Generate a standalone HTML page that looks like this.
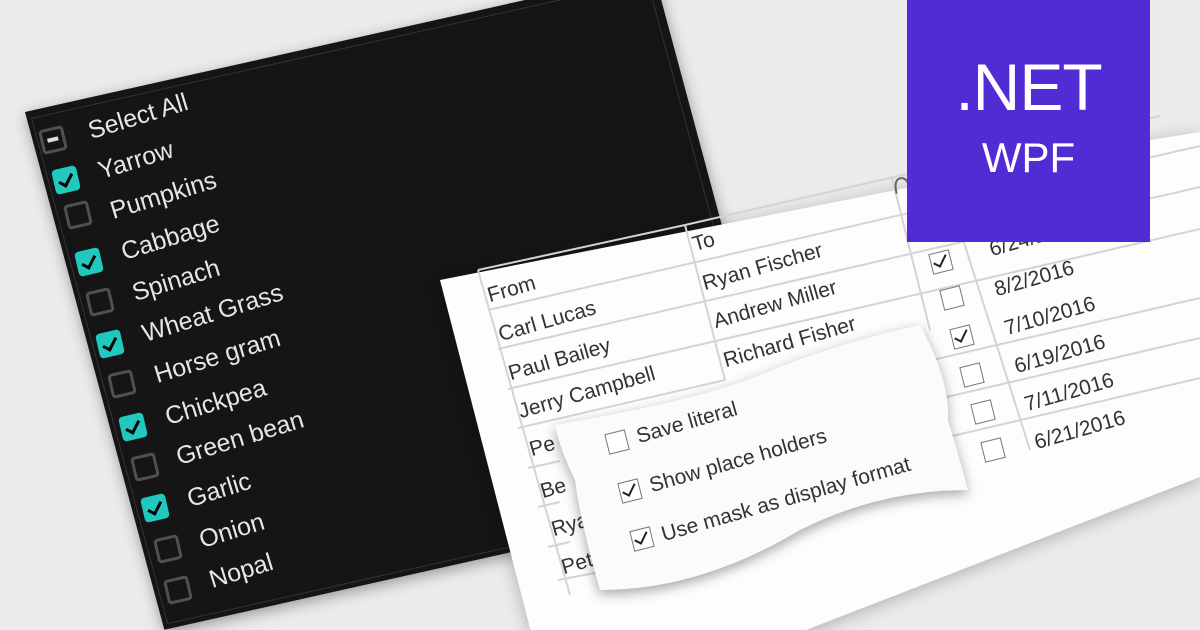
<!DOCTYPE html>
<html><head><meta charset="utf-8"><style>
html,body{margin:0;padding:0;width:1200px;height:630px;overflow:hidden}
body{background:#ebebeb;position:relative;font-family:"Segoe UI","Liberation Sans",sans-serif}
.abs{position:absolute}
.t{position:absolute;white-space:nowrap;transform-origin:0 50%;line-height:1}
.dk{color:#e6e6e6;font-size:25px;transform:translateY(-50%) rotate(-17deg)}
.wt{color:#333;font-size:21px;transform:translateY(-50%) rotate(-16deg)}
.cb{position:absolute;width:19px;height:19px;border:3px solid #505050;border-radius:4px;transform:translate(-50%,-50%) rotate(-13deg);box-sizing:content-box}
.cb.on{background:#20c8be;border-color:#20c8be}
.cb.on::after{content:"";position:absolute;left:5px;top:1px;width:6px;height:12px;border:solid #000;border-width:0 3px 3px 0;transform:rotate(40deg)}
.wc{position:absolute;width:19px;height:19px;border:1.5px solid #777;background:#fff;transform:translate(-50%,-50%) rotate(-14deg)}
.wc.on::after{content:"";position:absolute;left:5px;top:0px;width:6px;height:12px;border:solid #222;border-width:0 2.5px 2.5px 0;transform:rotate(40deg)}
</style></head><body>

<!-- dark panel -->
<div class="abs" style="left:25px;top:112px;width:640px;height:536px;background:#151515;transform-origin:0 0;transform:matrix(0.982,-0.22,0.26,0.966,0,0);box-shadow:0 4px 14px rgba(0,0,0,.35)"></div>
<div class="abs" style="left:31px;top:118px;width:626px;height:522px;border:1.5px solid #333;transform-origin:0 0;transform:matrix(0.982,-0.22,0.26,0.966,0,0)"></div>

<div class="cb" style="left:53px;top:140px"><div style="position:absolute;left:4px;top:7px;width:11px;height:4px;background:#ddd"></div></div>
<div class="cb on" style="left:66px;top:180px"></div>
<div class="cb" style="left:78px;top:215px"></div>
<div class="cb on" style="left:89px;top:262px"></div>
<div class="cb" style="left:100px;top:302px"></div>
<div class="cb on" style="left:110px;top:344px"></div>
<div class="cb" style="left:122px;top:384px"></div>
<div class="cb on" style="left:133px;top:427px"></div>
<div class="cb" style="left:145px;top:467px"></div>
<div class="cb on" style="left:155px;top:508px"></div>
<div class="cb" style="left:168px;top:549px"></div>
<div class="cb" style="left:178px;top:590px"></div>

<div class="t dk" style="left:89px;top:132px">Select All</div>
<div class="t dk" style="left:99px;top:172px">Yarrow</div>
<div class="t dk" style="left:111px;top:212px">Pumpkins</div>
<div class="t dk" style="left:122px;top:253px">Cabbage</div>
<div class="t dk" style="left:133px;top:294px">Spinach</div>
<div class="t dk" style="left:143px;top:335px">Wheat Grass</div>
<div class="t dk" style="left:155px;top:376px">Horse gram</div>
<div class="t dk" style="left:166px;top:418px">Chickpea</div>
<div class="t dk" style="left:177px;top:458px">Green bean</div>
<div class="t dk" style="left:188px;top:500px">Garlic</div>
<div class="t dk" style="left:200px;top:541px">Onion</div>
<div class="t dk" style="left:210px;top:581px">Nopal</div>

<!-- white panel -->
<svg class="abs" style="left:0;top:0;filter:drop-shadow(0 3px 8px rgba(0,0,0,.25))" width="1200" height="630">
<polygon points="440,280 1150,140 1200,132 1200,477 801,632 531,632" fill="#fdfdfd"/>
</svg>

<!-- grid -->
<svg class="abs" style="left:0;top:0" width="1200" height="630">
<g stroke="#d4d4d4" stroke-width="2" fill="none">
<line x1="478" y1="270" x2="685" y2="225"/>
<line x1="685" y1="225" x2="1160" y2="116"/>
<line x1="488" y1="310" x2="1200" y2="146"/>
<line x1="498" y1="349" x2="1200" y2="187"/>
<line x1="508" y1="389" x2="1200" y2="229"/>
<line x1="518" y1="428" x2="725" y2="380"/>
<line x1="528" y1="468" x2="560" y2="461"/>
<line x1="538" y1="507" x2="560" y2="502"/>
<line x1="548" y1="547" x2="570" y2="542"/>
<line x1="928" y1="361" x2="1200" y2="298"/>
<line x1="938" y1="399" x2="1200" y2="338"/>
<line x1="948" y1="437" x2="1200" y2="378"/>
<line x1="478" y1="270" x2="570" y2="595"/>
<line x1="685" y1="225" x2="725" y2="380"/>
<line x1="892" y1="178" x2="930" y2="330"/>
<line x1="960" y1="230" x2="1030" y2="450"/>
<line x1="558" y1="580" x2="600" y2="572"/>
</g>
<path d="M896 192 q0 -14 7 -14 q7 0 7 12 l0 10 q0 6 -5 6" stroke="#666" stroke-width="2" fill="none" transform="rotate(-14 903 190)"/>
</svg>

<div class="t wt" style="left:488px;top:296px">From</div>
<div class="t wt" style="left:499px;top:335px">Carl Lucas</div>
<div class="t wt" style="left:509px;top:374px">Paul Bailey</div>
<div class="t wt" style="left:519px;top:412px">Jerry Campbell</div>
<div class="t wt" style="left:530px;top:450px">Pe</div>
<div class="t wt" style="left:541px;top:492px">Be</div>
<div class="t wt" style="left:552px;top:530px">Rya</div>
<div class="t wt" style="left:562px;top:568px">Pete</div>
<div class="t wt" style="left:693px;top:245px">To</div>
<div class="t wt" style="left:703px;top:284px">Ryan Fischer</div>
<div class="t wt" style="left:714px;top:322px">Andrew Miller</div>
<div class="t wt" style="left:724px;top:361px">Richard Fisher</div>
<div class="t wt" style="left:990px;top:250px">6/24/2016</div>
<div class="t wt" style="left:995px;top:290px">8/2/2016</div>
<div class="t wt" style="left:1005px;top:329px">7/10/2016</div>
<div class="t wt" style="left:1015px;top:367px">6/19/2016</div>
<div class="t wt" style="left:1025px;top:405px">7/11/2016</div>
<div class="t wt" style="left:1035px;top:443px">6/21/2016</div>
<div class="wc on" style="left:941px;top:262px"></div>
<div class="wc" style="left:952px;top:298px"></div>
<div class="wc on" style="left:962px;top:337px"></div>
<div class="wc" style="left:972px;top:375px"></div>
<div class="wc" style="left:983px;top:412px"></div>
<div class="wc" style="left:993px;top:450px"></div>

<!-- popup -->
<svg class="abs" style="left:0;top:0;filter:drop-shadow(0 4px 6px rgba(0,0,0,.35))" width="1200" height="630">
<path d="M555 425 Q700 400 760 375 Q830 345 920 325 Q950 380 948 420 Q960 460 968 490 Q880 490 800 530 Q700 590 600 590 Q580 520 575 480 Q560 450 555 425 Z" fill="#fbfbfb"/>
</svg>
<div class="wc" style="left:617px;top:442px"></div>
<div class="t wt" style="left:637px;top:437px">Save literal</div>
<div class="wc on" style="left:630px;top:491px"></div>
<div class="t wt" style="left:650px;top:486px">Show place holders</div>
<div class="wc on" style="left:642px;top:539px"></div>
<div class="t wt" style="left:662px;top:535px">Use mask as display format</div>

<!-- .NET box -->
<div class="abs" style="left:907px;top:0;width:243px;height:242px;background:#512bd4;color:#fff;text-align:center">
<div style="position:absolute;left:0;right:0;top:54px;font-size:66px;line-height:1;letter-spacing:-1px">.NET</div>
<div style="position:absolute;left:0;right:0;top:137px;font-size:42px;line-height:1;font-weight:300">WPF</div>
</div>
</body></html>
